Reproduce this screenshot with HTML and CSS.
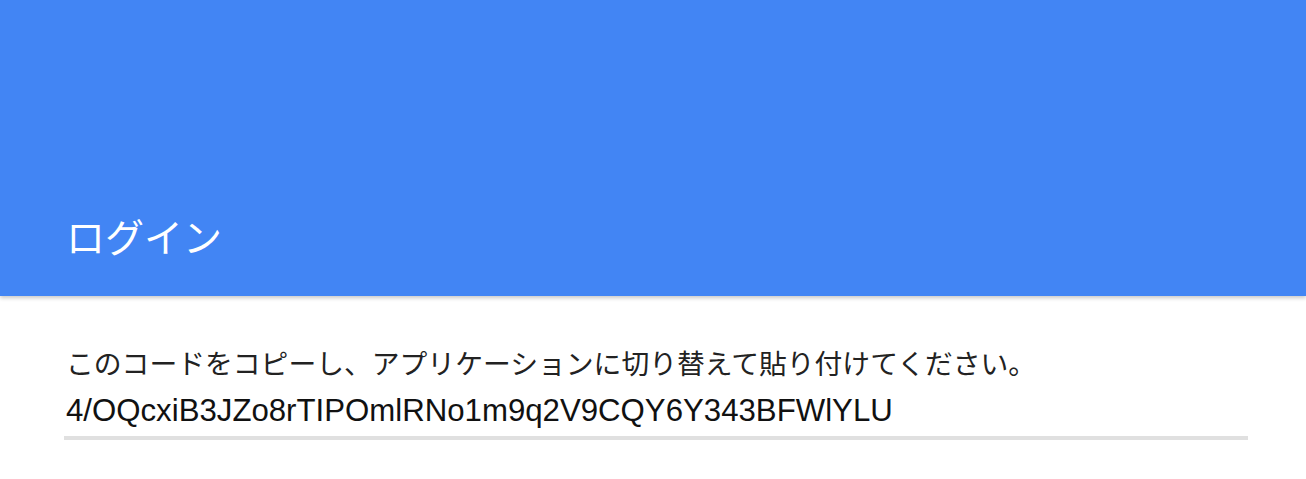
FILE: index.html
```html
<!DOCTYPE html>
<html lang="ja">
<head>
<meta charset="utf-8">
<title>ログイン</title>
<link rel="stylesheet" href="styles.css">
</head>
<body>
<header class="appbar">
  <h1 class="appbar-title">ログイン</h1>
</header>
<main class="content">
  <p class="message">このコードをコピーし、アプリケーションに切り替えて貼り付けてください。</p>
  <div class="code-field">
    <span class="code">4/OQcxiB3JZo8rTIPOmlRNo1m9q2V9CQY6Y343BFWlYLU</span>
  </div>
</main>
</body>
</html>
```

FILE: styles.css
```css
html, body {
  margin: 0;
  padding: 0;
  background: #ffffff;
}

body {
  font-family: "Liberation Sans", "Noto Sans CJK JP", sans-serif;
  color: #212121;
}

.appbar {
  background: #4285f4;
  height: 296px;
  display: flex;
  align-items: flex-end;
  padding: 0 66px;
  box-sizing: border-box;
  box-shadow: 0 2px 4px rgba(0, 0, 0, 0.22);
  position: relative;
  z-index: 1;
}

.appbar-title {
  margin: 0 0 37px 0;
  font-family: "Noto Sans CJK JP", sans-serif;
  font-weight: 400;
  font-size: 39px;
  line-height: 48px;
  color: #ffffff;
}

.content {
  padding: 46px 58px 0 64px;
}

.message {
  margin: 0 0 0 2px;
  font-family: "Noto Sans CJK JP", sans-serif;
  font-size: 27.8px;
  line-height: 40px;
  color: #222222;
}

.code-field {
  margin-top: 9px;
  padding: 0 0 5px 2px;
  border-bottom: 4px solid #e0e0e0;
}

.code {
  font-family: "Liberation Sans", sans-serif;
  font-size: 31.2px;
  line-height: 40px;
  color: #111111;
}
```
